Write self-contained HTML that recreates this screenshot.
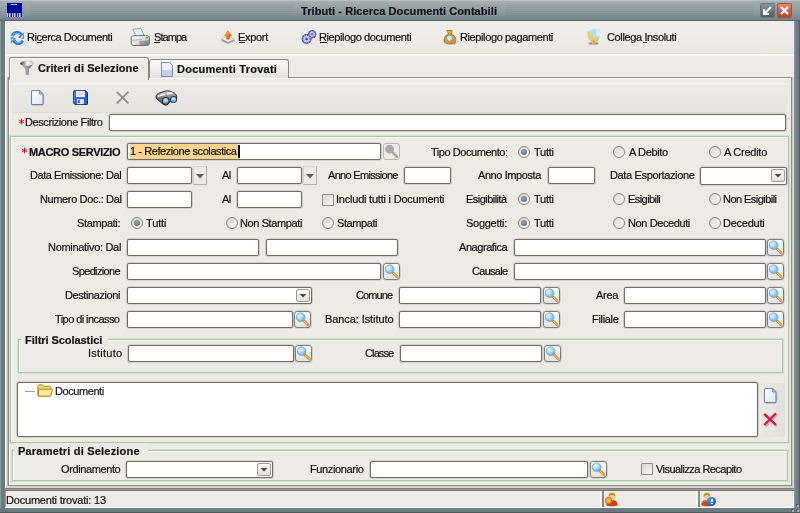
<!DOCTYPE html>
<html><head><meta charset="utf-8"><style>
html,body{margin:0;padding:0}
body{width:800px;height:513px;position:relative;overflow:hidden;background:#6b7a81;font-family:"Liberation Sans",sans-serif;font-size:11px;color:#000}
.t{position:absolute;white-space:nowrap;line-height:13px;font-size:11px;color:#111;-webkit-text-stroke:0.2px #111;will-change:transform}
.ast{color:#f00000;font-size:13px;letter-spacing:0;font-weight:normal;position:relative;top:1px;margin-right:2px}
.inp{position:absolute;border:1px solid #706c65;border-radius:2px;box-shadow:0 0 0 0.6px #bcb9b2}
.sb{position:absolute;width:15px;height:15px;border:1px solid #807d77;border-radius:3px;background:linear-gradient(#fdfdfc,#e4e3de);box-shadow:0 0 0 0.6px #c4c2bc}
.sbd{border-color:#bab7b0;background:#ecebe6;box-shadow:none}
.cb{position:absolute;width:12px;height:11px;border:1px solid #9c9a94;border-radius:2px;background:linear-gradient(#fbfbf9,#e2e1dc)}
.dd{position:absolute;width:12px;height:17px;border:1px solid #d6d4ce;border-right-color:#b3b1ab;border-bottom-color:#b3b1ab}
.rd{position:absolute;width:10px;height:10px;border:1px solid #85837d;border-radius:50%;background:linear-gradient(135deg,#d9d7d1,#fbfbf9)}
.rdot{position:absolute;left:2px;top:2px;width:6px;height:6px;border-radius:50%;background:radial-gradient(circle at 45% 40%,#a3acb1,#6a757b 60%,#566167);}
.ck{position:absolute;width:10px;height:10px;border:1px solid #8d8b85;border-radius:1px;background:linear-gradient(135deg,#d9d7d1,#fbfbf9)}
.gb{position:absolute;border:1px solid #a9c7a6;box-shadow:0 0 0 1px #d2e2d0, inset 1px 1px 0 #fbfbf9}
u{text-decoration:underline;text-decoration-thickness:1px;text-underline-offset:0px}
</style></head><body>
<svg width="0" height="0" style="position:absolute"><defs><radialGradient id="mg" cx="0.38" cy="0.35" r="0.7"><stop offset="0" stop-color="#eef9ff"/><stop offset="0.55" stop-color="#9dd3f5"/><stop offset="1" stop-color="#5aa6dc"/></radialGradient></defs></svg>

<div style="position:absolute;left:0px;top:0px;width:1px;height:513px;background:#8e999e"></div>
<div style="position:absolute;left:5px;top:21px;width:790px;height:487px;background:#ecebe6"></div>
<div style="position:absolute;left:795px;top:21px;width:4px;height:492px;background:linear-gradient(90deg,#7f8c92,#6e7e86 40%,#6a7980)"></div>
<div style="position:absolute;left:799px;top:0px;width:1px;height:513px;background:#505b60"></div>
<div style="position:absolute;left:0px;top:508px;width:800px;height:4px;background:linear-gradient(#6e7c83,#6a7980)"></div>
<div style="position:absolute;left:0px;top:512px;width:800px;height:1px;background:#4e595e"></div>
<div style="position:absolute;left:794px;top:21px;width:1px;height:487px;background:#8b9398"></div>
<div style="position:absolute;left:5px;top:21px;width:1px;height:487px;background:#fbfbf9"></div>
<div style="position:absolute;left:0;top:0;width:800px;height:21px;background:linear-gradient(#bac2c5 0px,#bac2c5 1px,#a6b0b4 1px,#96a2a7 8px,#84929a 15px,#74838a 20px,#56636a 20px)"></div>
<div style="position:absolute;left:30px;top:5px;width:263px;height:1px;background:rgba(40,50,55,0.07)"></div>
<div style="position:absolute;left:505px;top:5px;width:248px;height:1px;background:rgba(40,50,55,0.07)"></div>
<div style="position:absolute;left:30px;top:7px;width:263px;height:1px;background:rgba(40,50,55,0.07)"></div>
<div style="position:absolute;left:505px;top:7px;width:248px;height:1px;background:rgba(40,50,55,0.07)"></div>
<div style="position:absolute;left:30px;top:9px;width:263px;height:1px;background:rgba(40,50,55,0.07)"></div>
<div style="position:absolute;left:505px;top:9px;width:248px;height:1px;background:rgba(40,50,55,0.07)"></div>
<div style="position:absolute;left:30px;top:11px;width:263px;height:1px;background:rgba(40,50,55,0.07)"></div>
<div style="position:absolute;left:505px;top:11px;width:248px;height:1px;background:rgba(40,50,55,0.07)"></div>
<div style="position:absolute;left:30px;top:13px;width:263px;height:1px;background:rgba(40,50,55,0.07)"></div>
<div style="position:absolute;left:505px;top:13px;width:248px;height:1px;background:rgba(40,50,55,0.07)"></div>
<div style="position:absolute;left:30px;top:15px;width:263px;height:1px;background:rgba(40,50,55,0.07)"></div>
<div style="position:absolute;left:505px;top:15px;width:248px;height:1px;background:rgba(40,50,55,0.07)"></div>
<div style="position:absolute;left:7px;top:3px;width:15px;height:15px;background:#00009a"><div style="position:absolute;left:4px;top:1px;width:6px;height:1px;background:#b8b8e8"></div><div style="position:absolute;left:0px;top:10px;width:15px;height:5px;background:repeating-linear-gradient(90deg,#b8b8ec 0 1px,#3030b0 1px 2px,#e0e0fc 2px 3px,#6a6ac8 3px 4px,#1a1aa8 4px 5px)"></div><div style="position:absolute;left:0px;top:14px;width:15px;height:1px;background:#8080d0"></div></div>
<div class="t" style="left:301.00px;top:5px;letter-spacing:0.078px;font-weight:bold;color:#111">Tributi - Ricerca Documenti Contabili</div>
<div style="position:absolute;left:761px;top:4px;width:13px;height:13px;border-radius:1px;background:linear-gradient(#8a979c,#4f5c62);box-shadow:0 0 0 1px #66737a"><svg width="13" height="13" viewBox="0 0 13 13"><path d="M10 3 L3.5 9.5 M3 5 L3 10 L8 10" stroke="#fff" stroke-width="2" fill="none"/></svg></div>
<div style="position:absolute;left:778px;top:4px;width:13px;height:13px;border-radius:1px;background:linear-gradient(#e08a6e,#b4452c);box-shadow:0 0 0 1px #a05040"><svg width="13" height="13" viewBox="0 0 13 13"><path d="M3 3 L10 10 M10 3 L3 10" stroke="#fff" stroke-width="2.2"/></svg></div>
<div style="position:absolute;left:6px;top:21px;width:788px;height:32px;background:linear-gradient(#efeeea,#eae9e4)"></div>
<div style="position:absolute;left:6px;top:53px;width:788px;height:1px;background:#dddbd4"></div>
<div style="position:absolute;left:6px;top:54px;width:788px;height:2px;background:#fdfdfc"></div>
<div style="position:absolute;left:9.5px;top:29.5px"><svg width="16" height="16" viewBox="0 0 16 16"><defs><linearGradient id="rf" x1="0" y1="0" x2="0" y2="1"><stop offset="0" stop-color="#6fb6ff"/><stop offset="1" stop-color="#1f6fd6"/></linearGradient></defs><path d="M2.3 6.2 C3.5 1.8 9.5 1.2 11.6 5.3" stroke="#2a78dc" stroke-width="3" fill="none"/><path d="M2.6 6 C3.8 2.6 9 2.2 11 5.6" stroke="#8fc8ff" stroke-width="0.9" fill="none"/><path d="M8 7.6 L14 9 L13.6 2.6 Z" fill="#2a78dc"/><path d="M10 7.4 L13.2 8.2 L13 4.6 Z" fill="#b8dcff"/><path d="M0.8 6.8 L0.8 13.2 L6.2 8.4 Z" fill="#3a86e4"/><path d="M1.6 8.4 L1.6 11.2 L4 8.8 Z" fill="#c2e0ff"/><path d="M4 10.2 C5.2 14.2 10.8 14.6 12.6 10.6" stroke="#2a78dc" stroke-width="3" fill="none"/><path d="M4.6 10.6 C6 13.2 10.2 13.4 11.8 10.8" stroke="#7fbfff" stroke-width="0.9" fill="none"/></svg></div>
<div class="t" style="left:27.00px;top:31px;letter-spacing:-0.456px;">Ricerca Documenti</div>
<div style="position:absolute;left:130px;top:27px"><svg width="21" height="20" viewBox="0 0 21 20"><defs><linearGradient id="pb" x1="0" y1="0" x2="1" y2="1"><stop offset="0" stop-color="#ffffff"/><stop offset="0.5" stop-color="#e4e6e6"/><stop offset="1" stop-color="#8a8e8e"/></linearGradient></defs><path d="M2.8 2.2 L10.8 1.4 L14.2 8.6 L6 9.6 Z" fill="#e2f2fa" stroke="#8c9a9e" stroke-width="0.9"/><path d="M1.2 11 C1.2 9.8 2 9 3.5 8.8 L15.5 8.4 C17.8 8.4 19.4 9.4 19.4 11 L19.4 16.2 C19.4 17.6 18.4 18.5 16.8 18.5 L3.8 18.5 C2.2 18.5 1.2 17.6 1.2 16.2 Z" fill="url(#pb)" stroke="#6c7272" stroke-width="1"/><path d="M2.5 13.2 L12 12.6" stroke="#9aa0a0" stroke-width="0.9"/><path d="M9 14.2 L18.8 13 L18.8 16 C18.8 17.4 17.8 18 16.6 18 L10 18 Z" fill="#5a5e5e" opacity="0.45"/><rect x="15.6" y="9.8" width="2.4" height="1.8" rx="0.6" fill="#22c422"/></svg></div>
<div class="t" style="left:154.00px;top:31px;letter-spacing:-0.940px;">Stampa</div>
<div style="position:absolute;left:220px;top:29px"><svg width="16" height="16" viewBox="0 0 16 16"><path d="M1.5 9.5 L8 7 L14.5 10 L14.5 12 L8 15 L1.5 12 Z" fill="#9b9b9b"/><path d="M1.5 9.5 L8 7 L14.5 10 L8 13 Z" fill="#f4f4f4" stroke="#bbbbbb" stroke-width="0.5"/><path d="M4.2 7.5 L7.5 1 L12.2 6.8 L10.4 7.2 L9.6 10.8 L6 10.2 L6.4 7 Z" fill="#f06a22"/><path d="M5.2 7 L7.5 2 L9.5 5 L7.5 6 Z" fill="#ffa060"/></svg></div>
<div class="t" style="left:238.00px;top:31px;letter-spacing:-0.300px;">Export</div>
<div style="position:absolute;left:301px;top:28.5px"><svg width="16" height="16" viewBox="0 0 16 16"><g fill="#5a5ea8"><circle cx="11.2" cy="5.2" r="4.2"/><circle cx="5.6" cy="10" r="5"/></g><circle cx="11.2" cy="5.2" r="3.2" fill="#b9bcec" stroke="#5a5ea8" stroke-width="1.3" stroke-dasharray="1.2 0.9"/><circle cx="11.2" cy="5.2" r="1.1" fill="#6a6eb8"/><circle cx="5.6" cy="10" r="3.9" fill="#c4c7f0" stroke="#5a5ea8" stroke-width="1.5" stroke-dasharray="1.3 1"/><circle cx="5.6" cy="10" r="1.3" fill="#40447a"/></svg></div>
<div class="t" style="left:318.75px;top:31px;letter-spacing:-0.389px;">Riepilogo documenti</div>
<div style="position:absolute;left:442px;top:29px"><svg width="16" height="17" viewBox="0 0 16 17"><path d="M4.8 1.5 L10.2 1.5 L9.4 4.8 C12.8 6 14.6 9.8 13.6 13.2 C12.8 15.6 3.4 15.6 2.4 13.2 C1.4 9.8 3.2 6 6.6 4.8 Z" fill="#caa02a" stroke="#8f6a12" stroke-width="0.8"/><path d="M5.5 3 L10 3" stroke="#e6c050" stroke-width="1"/><circle cx="7.5" cy="9.2" r="3" fill="#cfe8f5" stroke="#7f96a6" stroke-width="0.8"/><path d="M9.8 11.6 L13.2 15" stroke="#f06a2a" stroke-width="2"/><path d="M10.6 12.4 L12.4 14.2" stroke="#ffc070" stroke-width="0.7"/></svg></div>
<div class="t" style="left:459.50px;top:31px;letter-spacing:-0.389px;">Riepilogo pagamenti</div>
<div style="position:absolute;left:586px;top:27px"><svg width="16" height="19" viewBox="0 0 16 19"><path d="M3 4 C1 7 1.5 12 4.5 14 L6 15 L11 15 C13.5 13 14 9 12.5 6 Z" fill="#555" opacity="0.25"/><circle cx="8" cy="7" r="5.2" fill="#b6dcf8"/><path d="M1.5 3.5 C1 7 2 11 5 13 C8 14.5 11 14 12.8 11.5 C10 12 7.5 10.5 6.5 9 C5 9.5 3.5 8 3.5 6 Z" fill="#f2cc3a"/><path d="M9 3 C10.5 4 11 6 10 7.5 C11.5 8 12.5 9 12.7 10.5 C13.4 8.5 13.2 5.5 11.5 3.5 Z" fill="#e0f2ff"/><path d="M3.5 16.5 L11.5 16.5" stroke="#8a8a8a" stroke-width="2" stroke-linecap="round"/><path d="M7.5 13.5 L7.5 16" stroke="#9a9a9a" stroke-width="1.6"/><circle cx="7.5" cy="16.4" r="1.3" fill="#e8b820"/></svg></div>
<div class="t" style="left:606.80px;top:31px;letter-spacing:-0.367px;">Collega Insoluti</div>
<div style="position:absolute;left:37px;top:42px;width:5px;height:1px;background:#111"></div>
<div style="position:absolute;left:154px;top:42px;width:6px;height:1px;background:#111"></div>
<div style="position:absolute;left:239px;top:42px;width:6px;height:1px;background:#111"></div>
<div style="position:absolute;left:320px;top:42px;width:7px;height:1px;background:#111"></div>
<div style="position:absolute;left:643px;top:42px;width:4px;height:1px;background:#111"></div>
<div style="position:absolute;left:8px;top:77px;width:782px;height:407px;border:1px solid #8f8c86;background:#ecebe6;box-shadow:inset 1px 1px 0 #fdfdfc, -1px 0 0 #b8b5ae"></div>
<div style="position:absolute;left:792px;top:77px;width:2px;height:409px;background:#cfcdc8"></div>
<div style="position:absolute;left:149px;top:59px;width:138px;height:18px;border:1px solid #8a8781;border-bottom:none;border-radius:3px 3px 0 0;background:linear-gradient(#fbfbfa,#e4e3de)"></div>
<div style="position:absolute;left:9px;top:57px;width:138px;height:22px;border:1px solid #8a8781;border-bottom:none;border-radius:3px 3px 0 0;background:#ecebe6;box-shadow:inset 1px 1px 0 #fdfdfc"></div>
<div style="position:absolute;left:19px;top:60px"><svg width="16" height="16" viewBox="0 0 16 16"><defs><linearGradient id="fn" x1="0" x2="1"><stop offset="0" stop-color="#3a3a3a"/><stop offset="0.55" stop-color="#f8f8f8"/><stop offset="1" stop-color="#c8c8c8"/></linearGradient><linearGradient id="fc" x1="0" x2="1"><stop offset="0" stop-color="#d8d8d8"/><stop offset="0.5" stop-color="#9a9a9a"/><stop offset="1" stop-color="#5a5a5a"/></linearGradient></defs><path d="M1.2 3.5 C1.2 1.8 4.5 1 8 1 C11.5 1 14.8 1.8 14.8 3.5 L9.8 9.5 L9.6 14.5 C9 15.3 7.2 15.3 6.6 14.5 L6.4 9.5 Z" fill="url(#fc)"/><ellipse cx="8" cy="3.4" rx="6.8" ry="2.3" fill="url(#fn)"/></svg></div>
<div class="t" style="left:37.50px;top:62px;letter-spacing:0.079px;font-weight:bold;">Criteri di Selezione</div>
<div style="position:absolute;left:160px;top:62px"><svg width="14" height="15" viewBox="0 0 14 15"><path d="M1.5 0.5 L9.5 0.5 L12.5 3.5 L12.5 14.5 L1.5 14.5 Z" fill="#eef2fa" stroke="#7d8fb8" stroke-width="1"/><path d="M2 8 L12 8 L12 14 L2 14 Z" fill="#c3cfe8"/></svg></div>
<div class="t" style="left:177.40px;top:63px;letter-spacing:0.244px;font-weight:bold;">Documenti Trovati</div>
<div style="position:absolute;left:13px;top:83px;width:774px;height:30px;background:linear-gradient(#f3f2ee 0,#f3f2ee 1px,#ebeae5 2px,#e6e5e0)"></div>
<div style="position:absolute;left:29px;top:90px"><svg width="16" height="16" viewBox="0 0 16 16"><defs><linearGradient id="pg" x1="0" y1="0" x2="1" y2="1"><stop offset="0" stop-color="#ffffff"/><stop offset="1" stop-color="#dce6f6"/></linearGradient></defs><path d="M2.5 1.5 C2.5 1 3 0.5 3.5 0.5 L10.5 0.5 L14 4 L14 13.5 C14 14 13.5 14.5 13 14.5 L3.5 14.5 C3 14.5 2.5 14 2.5 13.5 Z" fill="url(#pg)" stroke="#6f84b8" stroke-width="1.1"/><path d="M10.5 0.8 L10.5 4 L13.8 4" fill="#aebde0" stroke="#6f84b8" stroke-width="0.9"/><path d="M3.5 15.3 L13.5 15.3 M14.8 4.5 L14.8 14.5" stroke="#4a4a4a" stroke-width="0.8" opacity="0.35"/></svg></div>
<div style="position:absolute;left:73px;top:90px;width:15px;height:15px"><svg width="15" height="15" viewBox="0 0 16 16"><path d="M0.5 1.5 C0.5 1 1 0.5 1.5 0.5 L13.5 0.5 L15.5 2.5 L15.5 14.5 C15.5 15 15 15.5 14.5 15.5 L2 15.5 L0.5 14 Z" fill="#2a62d0" stroke="#143e9a" stroke-width="1"/><path d="M1.8 2 L1.8 13" stroke="#5b92f0" stroke-width="1"/><rect x="3.2" y="1" width="9.4" height="6.6" fill="#eef1f6"/><path d="M4.5 3.2 L11 3.2 M4.5 5 L11 5" stroke="#c0c4cc" stroke-width="0.8"/><rect x="4.2" y="9.6" width="7.4" height="5.6" fill="#dfe6f2"/><rect x="5.2" y="10.4" width="2" height="3.6" fill="#2a62d0"/><path d="M15.5 3 L15.5 15.5 L2.5 15.5" stroke="#0a1a40" stroke-width="0.8" fill="none" opacity="0.6"/></svg></div>
<div style="position:absolute;left:115px;top:90px"><svg width="16" height="16" viewBox="0 0 16 16"><path d="M1.8 1.8 L13.4 13.4 M13.4 1.8 L1.8 13.4" stroke="#8f8f8f" stroke-width="1.9"/><path d="M2.8 14.2 L3.8 13.2 M14.2 14.2 L13.2 13.2" stroke="#c8c8c8" stroke-width="1"/></svg></div>
<div style="position:absolute;left:155px;top:90px"><svg width="23" height="16" viewBox="0 0 23 16"><defs><linearGradient id="bg1" x1="0" y1="0" x2="0" y2="1"><stop offset="0" stop-color="#d8d8d8"/><stop offset="0.5" stop-color="#7a7a7a"/><stop offset="1" stop-color="#3a3a3a"/></linearGradient><radialGradient id="lz" cx="0.45" cy="0.4" r="0.6"><stop offset="0" stop-color="#d8ecff"/><stop offset="1" stop-color="#5d9fe0"/></radialGradient></defs><path d="M1 7 C1 5 2.5 3.5 5 2.8 L10 1.2 C12 0.6 14 0.8 16 1.6 L19.5 3.2 C21 4 21.8 5.5 21.7 8 C21.6 10.5 20.2 12 18.5 12 C17 12 15.8 11.6 14.8 10.9 C14.3 13.6 12.6 15 10.5 15 C9 15 7.8 14.2 7 13.2 L2 9 C1.3 8.4 1 7.8 1 7 Z" fill="url(#bg1)" stroke="#2a2a2a" stroke-width="1"/><path d="M3.5 6 L9.5 4.2 M12.5 3.6 L17 3" stroke="#ffffff" stroke-width="1.6" stroke-linecap="round"/><circle cx="10.8" cy="10.8" r="3.7" fill="#2a2a2a"/><circle cx="18.6" cy="9.4" r="3.4" fill="#2a2a2a"/><circle cx="10.8" cy="10.8" r="2.9" fill="url(#lz)"/><circle cx="18.6" cy="9.4" r="2.6" fill="url(#lz)"/></svg></div>
<div style="position:absolute;left:13px;top:112px;width:774px;height:1px;background:#dcdad3"></div>
<svg width="7" height="7" viewBox="0 0 7 7" style="position:absolute;left:18.25px;top:118px"><path d="M3.5 0.6 L3.5 6.4 M0.9 2 L6.1 5 M6.1 2 L0.9 5" stroke="#f00000" stroke-width="0.95"/></svg>
<div class="t" style="left:25.00px;top:116px;letter-spacing:-0.412px;">Descrizione Filtro</div>
<div class="inp" style="left:109px;top:114px;width:675px;height:15px;background:#fff"></div>
<div class="gb" style="left:10px;top:136px;width:777px;height:305px"></div>
<svg width="7" height="7" viewBox="0 0 7 7" style="position:absolute;left:20.5px;top:147px"><path d="M3.5 0.6 L3.5 6.4 M0.9 2 L6.1 5 M6.1 2 L0.9 5" stroke="#f00000" stroke-width="0.95"/></svg>
<div class="t" style="left:28.50px;top:146px;letter-spacing:-0.315px;font-weight:bold;">MACRO SERVIZIO</div>
<div class="inp" style="left:127px;top:143px;width:252px;height:15px;background:#fff"></div>
<div style="position:absolute;left:130px;top:144px;width:108px;height:15px;background:#fbd48e"></div>
<div class="t" style="left:129.80px;top:145px;letter-spacing:-0.426px;">1 - Refezione scolastica</div>
<div style="position:absolute;left:238px;top:145px;width:2px;height:13px;background:#000"></div>
<div class="sb sbd" style="left:383px;top:143px"><svg width="17" height="17" viewBox="0 0 17 17" style="position:absolute;left:-1px;top:-1px"><path d="M9.6 9.4 L14 13.8" stroke="#a6a6a6" stroke-width="2.6" stroke-linecap="round"/><circle cx="6.6" cy="6.2" r="4.4" fill="#a9a9a9"/></svg></div>
<div class="t" style="left:431.00px;top:146px;letter-spacing:-0.450px;">Tipo Documento:</div>
<div class="rd" style="left:518px;top:146px"><div class="rdot"></div></div>
<div class="t" style="left:533.80px;top:146px;letter-spacing:-0.250px;">Tutti</div>
<div class="rd" style="left:613px;top:146px"></div>
<div class="t" style="left:629.00px;top:146px;letter-spacing:-0.357px;">A Debito</div>
<div class="rd" style="left:709px;top:146px"></div>
<div class="t" style="left:724.20px;top:146px;letter-spacing:-0.250px;">A Credito</div>
<div class="t" style="left:30.00px;top:169px;letter-spacing:-0.444px;">Data Emissione: Dal</div>
<div class="inp" style="left:127px;top:167px;width:63px;height:15px;background:#fff"></div>
<div class="dd" style="left:193px;top:166px"><svg width="12" height="17" viewBox="0 0 12 17" style="position:absolute;left:0;top:0"><path d="M2 7 L10 7 L6 11.5 Z" fill="#5f5f5f"/></svg></div>
<div class="t" style="left:221.50px;top:169px;letter-spacing:-0.500px;">Al</div>
<div class="inp" style="left:237px;top:167px;width:63px;height:15px;background:#fff"></div>
<div class="dd" style="left:303px;top:166px"><svg width="12" height="17" viewBox="0 0 12 17" style="position:absolute;left:0;top:0"><path d="M2 7 L10 7 L6 11.5 Z" fill="#5f5f5f"/></svg></div>
<div class="t" style="left:328.00px;top:169px;letter-spacing:-0.692px;">Anno Emissione</div>
<div class="inp" style="left:404px;top:167px;width:45px;height:15px;background:#fff"></div>
<div class="t" style="left:477.80px;top:169px;letter-spacing:-0.418px;">Anno Imposta</div>
<div class="inp" style="left:548px;top:167px;width:45px;height:15px;background:#fff"></div>
<div class="t" style="left:609.50px;top:169px;letter-spacing:-0.356px;">Data Esportazione</div>
<div class="inp" style="left:700px;top:167px;width:85px;height:16px;background:#fff"></div>
<div class="cb" style="left:771px;top:169px"><svg width="12" height="11" viewBox="0 0 12 11" style="position:absolute;left:0;top:0"><path d="M2.5 4 L9.5 4 L6 7.5 Z" fill="#474747"/></svg></div>
<div class="t" style="left:39.50px;top:193px;letter-spacing:-0.373px;">Numero Doc.: Dal</div>
<div class="inp" style="left:127px;top:191px;width:63px;height:15px;background:#fff"></div>
<div class="t" style="left:221.50px;top:193px;letter-spacing:-0.500px;">Al</div>
<div class="inp" style="left:237px;top:191px;width:63px;height:15px;background:#fff"></div>
<div class="ck" style="left:322px;top:194px"></div>
<div class="t" style="left:336.20px;top:193px;letter-spacing:-0.217px;">Includi tutti i Documenti</div>
<div class="t" style="left:465.90px;top:193px;letter-spacing:-0.530px;">Esigibilità</div>
<div class="rd" style="left:518px;top:193px"><div class="rdot"></div></div>
<div class="t" style="left:533.80px;top:193px;letter-spacing:-0.250px;">Tutti</div>
<div class="rd" style="left:613px;top:193px"></div>
<div class="t" style="left:628.00px;top:193px;letter-spacing:-0.562px;">Esigibili</div>
<div class="rd" style="left:709px;top:193px"></div>
<div class="t" style="left:723.20px;top:193px;letter-spacing:-0.542px;">Non Esigibili</div>
<div class="t" style="left:77.10px;top:217px;letter-spacing:-0.375px;">Stampati:</div>
<div class="rd" style="left:131px;top:217px"><div class="rdot"></div></div>
<div class="t" style="left:145.75px;top:217px;letter-spacing:-0.125px;">Tutti</div>
<div class="rd" style="left:226px;top:217px"></div>
<div class="t" style="left:240.30px;top:217px;letter-spacing:-0.391px;">Non Stampati</div>
<div class="rd" style="left:322px;top:217px"></div>
<div class="t" style="left:336.80px;top:217px;letter-spacing:-0.414px;">Stampati</div>
<div class="t" style="left:465.90px;top:217px;letter-spacing:-0.275px;">Soggetti:</div>
<div class="rd" style="left:518px;top:217px"><div class="rdot"></div></div>
<div class="t" style="left:533.80px;top:217px;letter-spacing:-0.250px;">Tutti</div>
<div class="rd" style="left:613px;top:217px"></div>
<div class="t" style="left:628.00px;top:217px;letter-spacing:-0.400px;">Non Deceduti</div>
<div class="rd" style="left:709px;top:217px"></div>
<div class="t" style="left:723.20px;top:217px;letter-spacing:-0.243px;">Deceduti</div>
<div class="t" style="left:48.20px;top:241px;letter-spacing:-0.307px;">Nominativo: Dal</div>
<div class="inp" style="left:127px;top:239px;width:130px;height:15px;background:#fff"></div>
<div class="inp" style="left:266px;top:239px;width:130px;height:15px;background:#fff"></div>
<div class="t" style="left:458.50px;top:241px;letter-spacing:-0.433px;">Anagrafica</div>
<div class="inp" style="left:514px;top:239px;width:250px;height:15px;background:#fff"></div>
<div class="sb" style="left:767px;top:239px"><svg width="17" height="17" viewBox="0 0 17 17" style="position:absolute;left:-1px;top:-1px"><path d="M9.6 9.4 L14.2 14" stroke="#f08a1c" stroke-width="2.8" stroke-linecap="round"/><path d="M10.4 10.6 L13.6 13.6" stroke="#ffe070" stroke-width="0.9" stroke-linecap="round"/><path d="M13.6 13.4 L14.4 14.2" stroke="#b0b0b0" stroke-width="1.6" stroke-linecap="round"/><circle cx="6.6" cy="6.2" r="4.4" fill="url(#mg)" stroke="#6aa0c8" stroke-width="0.7"/></svg></div>
<div class="t" style="left:72.20px;top:265px;letter-spacing:-0.644px;">Spedizione</div>
<div class="inp" style="left:127px;top:263px;width:252px;height:15px;background:#fff"></div>
<div class="sb" style="left:383px;top:263px"><svg width="17" height="17" viewBox="0 0 17 17" style="position:absolute;left:-1px;top:-1px"><path d="M9.6 9.4 L14.2 14" stroke="#f08a1c" stroke-width="2.8" stroke-linecap="round"/><path d="M10.4 10.6 L13.6 13.6" stroke="#ffe070" stroke-width="0.9" stroke-linecap="round"/><path d="M13.6 13.4 L14.4 14.2" stroke="#b0b0b0" stroke-width="1.6" stroke-linecap="round"/><circle cx="6.6" cy="6.2" r="4.4" fill="url(#mg)" stroke="#6aa0c8" stroke-width="0.7"/></svg></div>
<div class="t" style="left:471.90px;top:265px;letter-spacing:-0.717px;">Causale</div>
<div class="inp" style="left:514px;top:263px;width:250px;height:15px;background:#fff"></div>
<div class="sb" style="left:767px;top:263px"><svg width="17" height="17" viewBox="0 0 17 17" style="position:absolute;left:-1px;top:-1px"><path d="M9.6 9.4 L14.2 14" stroke="#f08a1c" stroke-width="2.8" stroke-linecap="round"/><path d="M10.4 10.6 L13.6 13.6" stroke="#ffe070" stroke-width="0.9" stroke-linecap="round"/><path d="M13.6 13.4 L14.4 14.2" stroke="#b0b0b0" stroke-width="1.6" stroke-linecap="round"/><circle cx="6.6" cy="6.2" r="4.4" fill="url(#mg)" stroke="#6aa0c8" stroke-width="0.7"/></svg></div>
<div class="t" style="left:65.30px;top:289px;letter-spacing:-0.409px;">Destinazioni</div>
<div class="inp" style="left:127px;top:287px;width:183px;height:15px;background:#fff"></div>
<div class="cb" style="left:296px;top:289px"><svg width="12" height="11" viewBox="0 0 12 11" style="position:absolute;left:0;top:0"><path d="M2.5 4 L9.5 4 L6 7.5 Z" fill="#474747"/></svg></div>
<div class="t" style="left:356.20px;top:289px;letter-spacing:-0.900px;">Comune</div>
<div class="inp" style="left:399px;top:287px;width:140px;height:15px;background:#fff"></div>
<div class="sb" style="left:543px;top:287px"><svg width="17" height="17" viewBox="0 0 17 17" style="position:absolute;left:-1px;top:-1px"><path d="M9.6 9.4 L14.2 14" stroke="#f08a1c" stroke-width="2.8" stroke-linecap="round"/><path d="M10.4 10.6 L13.6 13.6" stroke="#ffe070" stroke-width="0.9" stroke-linecap="round"/><path d="M13.6 13.4 L14.4 14.2" stroke="#b0b0b0" stroke-width="1.6" stroke-linecap="round"/><circle cx="6.6" cy="6.2" r="4.4" fill="url(#mg)" stroke="#6aa0c8" stroke-width="0.7"/></svg></div>
<div class="t" style="left:595.90px;top:289px;letter-spacing:-0.300px;">Area</div>
<div class="inp" style="left:624px;top:287px;width:140px;height:15px;background:#fff"></div>
<div class="sb" style="left:767px;top:287px"><svg width="17" height="17" viewBox="0 0 17 17" style="position:absolute;left:-1px;top:-1px"><path d="M9.6 9.4 L14.2 14" stroke="#f08a1c" stroke-width="2.8" stroke-linecap="round"/><path d="M10.4 10.6 L13.6 13.6" stroke="#ffe070" stroke-width="0.9" stroke-linecap="round"/><path d="M13.6 13.4 L14.4 14.2" stroke="#b0b0b0" stroke-width="1.6" stroke-linecap="round"/><circle cx="6.6" cy="6.2" r="4.4" fill="url(#mg)" stroke="#6aa0c8" stroke-width="0.7"/></svg></div>
<div class="t" style="left:55.40px;top:313px;letter-spacing:-0.571px;">Tipo di incasso</div>
<div class="inp" style="left:127px;top:311px;width:164px;height:15px;background:#fff"></div>
<div class="sb" style="left:294px;top:311px"><svg width="17" height="17" viewBox="0 0 17 17" style="position:absolute;left:-1px;top:-1px"><path d="M9.6 9.4 L14.2 14" stroke="#f08a1c" stroke-width="2.8" stroke-linecap="round"/><path d="M10.4 10.6 L13.6 13.6" stroke="#ffe070" stroke-width="0.9" stroke-linecap="round"/><path d="M13.6 13.4 L14.4 14.2" stroke="#b0b0b0" stroke-width="1.6" stroke-linecap="round"/><circle cx="6.6" cy="6.2" r="4.4" fill="url(#mg)" stroke="#6aa0c8" stroke-width="0.7"/></svg></div>
<div class="t" style="left:324.90px;top:313px;letter-spacing:-0.086px;">Banca: Istituto</div>
<div class="inp" style="left:399px;top:311px;width:140px;height:15px;background:#fff"></div>
<div class="sb" style="left:543px;top:311px"><svg width="17" height="17" viewBox="0 0 17 17" style="position:absolute;left:-1px;top:-1px"><path d="M9.6 9.4 L14.2 14" stroke="#f08a1c" stroke-width="2.8" stroke-linecap="round"/><path d="M10.4 10.6 L13.6 13.6" stroke="#ffe070" stroke-width="0.9" stroke-linecap="round"/><path d="M13.6 13.4 L14.4 14.2" stroke="#b0b0b0" stroke-width="1.6" stroke-linecap="round"/><circle cx="6.6" cy="6.2" r="4.4" fill="url(#mg)" stroke="#6aa0c8" stroke-width="0.7"/></svg></div>
<div class="t" style="left:591.90px;top:313px;letter-spacing:-0.317px;">Filiale</div>
<div class="inp" style="left:624px;top:311px;width:140px;height:15px;background:#fff"></div>
<div class="sb" style="left:767px;top:311px"><svg width="17" height="17" viewBox="0 0 17 17" style="position:absolute;left:-1px;top:-1px"><path d="M9.6 9.4 L14.2 14" stroke="#f08a1c" stroke-width="2.8" stroke-linecap="round"/><path d="M10.4 10.6 L13.6 13.6" stroke="#ffe070" stroke-width="0.9" stroke-linecap="round"/><path d="M13.6 13.4 L14.4 14.2" stroke="#b0b0b0" stroke-width="1.6" stroke-linecap="round"/><circle cx="6.6" cy="6.2" r="4.4" fill="url(#mg)" stroke="#6aa0c8" stroke-width="0.7"/></svg></div>
<div class="gb" style="left:18px;top:339px;width:763px;height:32px"></div>
<div style="position:absolute;left:21px;top:333px;width:87px;height:13px;background:#ecebe6"></div>
<div class="t" style="left:24.50px;top:334px;letter-spacing:-0.062px;font-weight:bold;">Filtri Scolastici</div>
<div class="t" style="left:87.80px;top:347px;letter-spacing:0.243px;">Istituto</div>
<div class="inp" style="left:128px;top:345px;width:164px;height:15px;background:#fff"></div>
<div class="sb" style="left:295px;top:345px"><svg width="17" height="17" viewBox="0 0 17 17" style="position:absolute;left:-1px;top:-1px"><path d="M9.6 9.4 L14.2 14" stroke="#f08a1c" stroke-width="2.8" stroke-linecap="round"/><path d="M10.4 10.6 L13.6 13.6" stroke="#ffe070" stroke-width="0.9" stroke-linecap="round"/><path d="M13.6 13.4 L14.4 14.2" stroke="#b0b0b0" stroke-width="1.6" stroke-linecap="round"/><circle cx="6.6" cy="6.2" r="4.4" fill="url(#mg)" stroke="#6aa0c8" stroke-width="0.7"/></svg></div>
<div class="t" style="left:365.00px;top:347px;letter-spacing:-0.880px;">Classe</div>
<div class="inp" style="left:400px;top:345px;width:140px;height:15px;background:#fff"></div>
<div class="sb" style="left:544px;top:345px"><svg width="17" height="17" viewBox="0 0 17 17" style="position:absolute;left:-1px;top:-1px"><path d="M9.6 9.4 L14.2 14" stroke="#f08a1c" stroke-width="2.8" stroke-linecap="round"/><path d="M10.4 10.6 L13.6 13.6" stroke="#ffe070" stroke-width="0.9" stroke-linecap="round"/><path d="M13.6 13.4 L14.4 14.2" stroke="#b0b0b0" stroke-width="1.6" stroke-linecap="round"/><circle cx="6.6" cy="6.2" r="4.4" fill="url(#mg)" stroke="#6aa0c8" stroke-width="0.7"/></svg></div>
<div class="inp" style="left:17px;top:382px;width:739px;height:53px;background:#fff"></div>
<div style="position:absolute;left:25px;top:391px;width:10px;height:1px;background:#a0a0a0"></div>
<div style="position:absolute;left:37px;top:384px"><svg width="16" height="13" viewBox="0 0 16 13"><path d="M0.8 2.5 C0.8 1.5 1.5 0.8 2.5 0.8 L5.5 0.8 L6.8 2.2 L12.5 2.2 C13.4 2.2 14 2.8 14 3.6 L14 11 C14 11.8 13.4 12.2 12.6 12.2 L2.2 12.2 C1.4 12.2 0.8 11.6 0.8 10.8 Z" fill="#f2d774" stroke="#b08a1e" stroke-width="1"/><path d="M2.2 5.2 L15.2 5.2 C15.6 5.2 15.6 5.6 15.4 6 L13.6 11.6 C13.4 12 13 12.2 12.6 12.2 L1.4 12.2 L1.6 6 C1.6 5.5 1.8 5.2 2.2 5.2 Z" fill="#fbe89a" stroke="#b08a1e" stroke-width="1"/></svg></div>
<div class="t" style="left:54.80px;top:385px;letter-spacing:-0.425px;">Documenti</div>
<div style="position:absolute;left:761px;top:383px;width:24px;height:54px;background:linear-gradient(90deg,#eae9e4,#e2e1db)"></div>
<div style="position:absolute;left:762px;top:388px"><svg width="16" height="16" viewBox="0 0 16 16"><defs><linearGradient id="pg" x1="0" y1="0" x2="1" y2="1"><stop offset="0" stop-color="#ffffff"/><stop offset="1" stop-color="#dce6f6"/></linearGradient></defs><path d="M2.5 1.5 C2.5 1 3 0.5 3.5 0.5 L10.5 0.5 L14 4 L14 13.5 C14 14 13.5 14.5 13 14.5 L3.5 14.5 C3 14.5 2.5 14 2.5 13.5 Z" fill="url(#pg)" stroke="#6f84b8" stroke-width="1.1"/><path d="M10.5 0.8 L10.5 4 L13.8 4" fill="#aebde0" stroke="#6f84b8" stroke-width="0.9"/><path d="M3.5 15.3 L13.5 15.3 M14.8 4.5 L14.8 14.5" stroke="#4a4a4a" stroke-width="0.8" opacity="0.35"/></svg></div>
<div style="position:absolute;left:763px;top:412px"><svg width="16" height="16" viewBox="0 0 16 16"><path d="M1.5 2.2 L13.3 13.6 M13.3 1.6 L1.5 13.6" stroke="#7a2030" stroke-width="2.6" opacity="0.25" transform="translate(0.8,0.8)"/><path d="M1.2 1.8 L13 13 M13 1.2 L1.2 13" stroke="#dc1240" stroke-width="2.3"/></svg></div>
<div class="gb" style="left:12px;top:450px;width:774px;height:29px"></div>
<div style="position:absolute;left:14px;top:443px;width:134px;height:14px;background:#ecebe6"></div>
<div class="t" style="left:17.60px;top:445px;letter-spacing:0.200px;font-weight:bold;">Parametri di Selezione</div>
<div class="t" style="left:60.65px;top:463px;letter-spacing:-0.390px;">Ordinamento</div>
<div class="inp" style="left:126px;top:461px;width:145px;height:15px;background:#fff"></div>
<div class="cb" style="left:257px;top:463px"><svg width="12" height="11" viewBox="0 0 12 11" style="position:absolute;left:0;top:0"><path d="M2.5 4 L9.5 4 L6 7.5 Z" fill="#474747"/></svg></div>
<div class="t" style="left:310.00px;top:463px;letter-spacing:-0.360px;">Funzionario</div>
<div class="inp" style="left:370px;top:461px;width:216px;height:15px;background:#fff"></div>
<div class="sb" style="left:590px;top:461px"><svg width="17" height="17" viewBox="0 0 17 17" style="position:absolute;left:-1px;top:-1px"><path d="M9.6 9.4 L14.2 14" stroke="#f08a1c" stroke-width="2.8" stroke-linecap="round"/><path d="M10.4 10.6 L13.6 13.6" stroke="#ffe070" stroke-width="0.9" stroke-linecap="round"/><path d="M13.6 13.4 L14.4 14.2" stroke="#b0b0b0" stroke-width="1.6" stroke-linecap="round"/><circle cx="6.6" cy="6.2" r="4.4" fill="url(#mg)" stroke="#6aa0c8" stroke-width="0.7"/></svg></div>
<div class="ck" style="left:641px;top:463px"></div>
<div class="t" style="left:655.80px;top:463px;letter-spacing:-0.544px;">Visualizza Recapito</div>
<div style="position:absolute;left:6px;top:486px;width:788px;height:2px;background:#d3d1cc"></div>
<div style="position:absolute;left:5px;top:488px;width:789px;height:1px;background:#85827d"></div>
<div style="position:absolute;left:5px;top:489px;width:789px;height:1px;background:#9a9894"></div>
<div style="position:absolute;left:5px;top:490px;width:789px;height:1px;background:#777571"></div>
<div style="position:absolute;left:5px;top:491px;width:789px;height:17px;background:#ecebe6"></div>
<div style="position:absolute;left:5px;top:491px;width:1px;height:17px;background:#a09d98"></div>
<div style="position:absolute;left:5px;top:507px;width:789px;height:1px;background:#f6f6f4"></div>
<div style="position:absolute;left:793px;top:491px;width:1px;height:17px;background:#f6f6f4"></div>
<div style="position:absolute;left:796px;top:504px;width:2px;height:2px;background:#4e5a5f"></div>
<div style="position:absolute;left:797px;top:505px;width:2px;height:2px;background:#aab4b8"></div>
<div style="position:absolute;left:796px;top:509px;width:2px;height:2px;background:#4e5a5f"></div>
<div style="position:absolute;left:797px;top:510px;width:2px;height:2px;background:#aab4b8"></div>
<div style="position:absolute;left:791px;top:509px;width:2px;height:2px;background:#4e5a5f"></div>
<div style="position:absolute;left:792px;top:510px;width:2px;height:2px;background:#aab4b8"></div>
<div class="t" style="left:6.30px;top:494px;letter-spacing:-0.195px;">Documenti trovati: 13</div>
<div style="position:absolute;left:600px;top:491px;width:1px;height:16px;background:#fdfdfc"></div>
<div style="position:absolute;left:602px;top:491px;width:2px;height:16px;background:#8e8b85"></div>
<div style="position:absolute;left:696px;top:491px;width:1px;height:16px;background:#fdfdfc"></div>
<div style="position:absolute;left:698px;top:491px;width:2px;height:16px;background:#8e8b85"></div>
<div style="position:absolute;left:605px;top:492px"><svg width="14" height="15" viewBox="0 0 14 15"><path d="M1.5 13.5 C1 9.5 3.5 8 7 8 C10.5 8 13 9.5 12.5 13.5 C10 14.6 4 14.6 1.5 13.5 Z" fill="#d0401a"/><path d="M3 11 C3.5 9.5 5 9 7 9" stroke="#f07040" stroke-width="1" fill="none"/><ellipse cx="7" cy="5.3" rx="2.8" ry="3.1" fill="#f8c898"/><path d="M3.8 5.5 C3 2 5 0.8 7 0.8 C9.5 0.8 11 2.5 10.2 5.5 C9.8 3.8 8.5 3.2 7 3.2 C5.5 3.2 4.2 3.8 3.8 5.5 Z" fill="#c8941e"/></svg><div style="position:absolute;left:0px;top:5px;width:7px;height:7px;border-radius:50%;background:radial-gradient(circle,#ffe030 0,#ffc020 35%,#f06040 60%,#e84a2a 100%)"></div></div>
<div style="position:absolute;left:700px;top:492px"><svg width="14" height="15" viewBox="0 0 14 15"><path d="M1.5 13.5 C1 9.5 3.5 8 7 8 C10.5 8 13 9.5 12.5 13.5 C10 14.6 4 14.6 1.5 13.5 Z" fill="#d0401a"/><path d="M3 11 C3.5 9.5 5 9 7 9" stroke="#f07040" stroke-width="1" fill="none"/><ellipse cx="7" cy="5.3" rx="2.8" ry="3.1" fill="#f8c898"/><path d="M3.8 5.5 C3 2 5 0.8 7 0.8 C9.5 0.8 11 2.5 10.2 5.5 C9.8 3.8 8.5 3.2 7 3.2 C5.5 3.2 4.2 3.8 3.8 5.5 Z" fill="#c8941e"/></svg><div style="position:absolute;left:7px;top:5px;width:9px;height:9px;border-radius:50%;background:radial-gradient(circle at 40% 35%,#4aa0f8,#1060d0 70%,#0a48a8)"><div style="position:absolute;left:4px;top:2px;width:1.6px;height:3px;background:#fff"></div><div style="position:absolute;left:4px;top:6px;width:1.6px;height:1.4px;background:#fff"></div></div></div>
</body></html>
